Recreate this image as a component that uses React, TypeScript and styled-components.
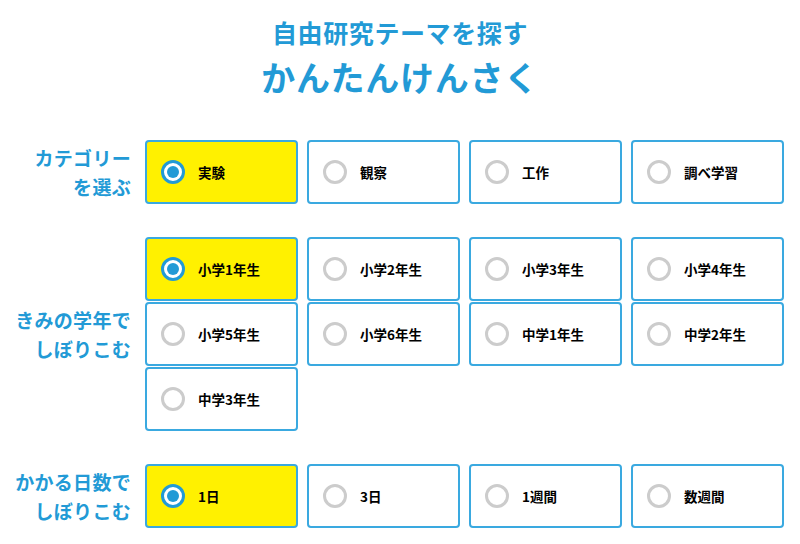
import React from "react";
import styled, { createGlobalStyle } from "styled-components";

const GlobalStyle = createGlobalStyle`
  html, body {
    margin: 0;
    padding: 0;
    background: #ffffff;
  }
  body {
    font-family: "Noto Sans CJK JP", "Noto Sans", sans-serif;
  }
`;

const BLUE = "#229ad6";
const BORDER = "#3aa9e0";
const YELLOW = "#fff100";

const Page = styled.div`
  width: 800px;
  padding-top: 14px;
`;

const Header = styled.header`
  display: flex;
  flex-direction: column;
  align-items: center;
  color: ${BLUE};
  font-weight: 700;
`;

const Title = styled.h2`
  margin: 0;
  font-size: 25px;
  line-height: 36px;
  letter-spacing: 0.6px;
`;

const Subtitle = styled.h1`
  margin: 4px 0 0;
  font-size: 34px;
  line-height: 46px;
  letter-spacing: 0.7px;
`;

const Sections = styled.div`
  display: flex;
  flex-direction: column;
  gap: 33px;
  margin-top: 40px;
`;

const Section = styled.section`
  display: flex;
  align-items: center;
`;

const Label = styled.div`
  width: 131px;
  padding-right: 14px;
  text-align: right;
  color: ${BLUE};
  font-size: 19px;
  line-height: 29px;
  letter-spacing: 0.3px;
  font-weight: 700;
`;

const Options = styled.div`
  display: grid;
  grid-template-columns: repeat(4, 153px);
  column-gap: 9px;
  row-gap: 1px;
`;

const Card = styled.label<{ $selected: boolean }>`
  box-sizing: border-box;
  height: 64px;
  display: flex;
  align-items: center;
  gap: 13px;
  padding-left: 14px;
  border: 2px solid ${BORDER};
  border-radius: 4px;
  background: ${(p) => (p.$selected ? YELLOW : "#ffffff")};
  cursor: pointer;
`;

const Radio = styled.span<{ $selected: boolean }>`
  box-sizing: border-box;
  width: 24px;
  height: 24px;
  border-radius: 50%;
  border: 3px solid ${(p) => (p.$selected ? BLUE : "#cccccc")};
  background: #ffffff;
  display: flex;
  align-items: center;
  justify-content: center;
  flex-shrink: 0;

  &::after {
    content: "";
    display: ${(p) => (p.$selected ? "block" : "none")};
    width: 12px;
    height: 12px;
    border-radius: 50%;
    background: ${BLUE};
  }
`;

const OptionText = styled.span`
  font-size: 13.5px;
  font-weight: 700;
  color: #000000;
`;

type Group = {
  label: string[];
  options: string[];
  selected: number;
};

const groups: Group[] = [
  {
    label: ["カテゴリー", "を選ぶ"],
    options: ["実験", "観察", "工作", "調べ学習"],
    selected: 0,
  },
  {
    label: ["きみの学年で", "しぼりこむ"],
    options: [
      "小学1年生",
      "小学2年生",
      "小学3年生",
      "小学4年生",
      "小学5年生",
      "小学6年生",
      "中学1年生",
      "中学2年生",
      "中学3年生",
    ],
    selected: 0,
  },
  {
    label: ["かかる日数で", "しぼりこむ"],
    options: ["1日", "3日", "1週間", "数週間"],
    selected: 0,
  },
];

export default function App() {
  return (
    <>
      <GlobalStyle />
      <Page>
        <Header>
          <Title>自由研究テーマを探す</Title>
          <Subtitle>かんたんけんさく</Subtitle>
        </Header>
        <Sections>
          {groups.map((g, gi) => (
            <Section key={gi}>
              <Label>
                {g.label.map((l, i) => (
                  <div key={i}>{l}</div>
                ))}
              </Label>
              <Options>
                {g.options.map((o, oi) => (
                  <Card key={oi} $selected={oi === g.selected}>
                    <Radio $selected={oi === g.selected} />
                    <OptionText>{o}</OptionText>
                  </Card>
                ))}
              </Options>
            </Section>
          ))}
        </Sections>
      </Page>
    </>
  );
}
